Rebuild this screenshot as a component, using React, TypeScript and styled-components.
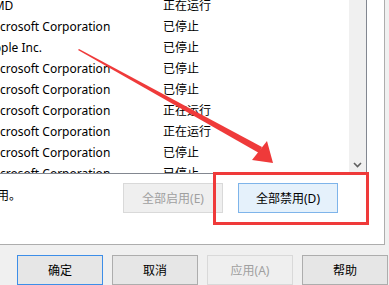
import React from "react";
import styled, { createGlobalStyle } from "styled-components";

// msconfig "服务" tab, scrolled list + buttons, with a red annotation on top

const GlobalStyle = createGlobalStyle`
  html, body {
    margin: 0;
    padding: 0;
    background: #f0f0f0;
  }
  body {
    width: 389px;
    height: 285px;
    overflow: hidden;
    font-family: "Noto Sans", "Noto Sans CJK SC", sans-serif;
    font-size: 12px;
    color: #000;
  }
`;

interface Service {
  maker: string;
  status: string;
}

const services: Service[] = [
  { maker: "AMD", status: "正在运行" },
  { maker: "Microsoft Corporation", status: "已停止" },
  { maker: "Apple Inc.", status: "已停止" },
  { maker: "Microsoft Corporation", status: "已停止" },
  { maker: "Microsoft Corporation", status: "已停止" },
  { maker: "Microsoft Corporation", status: "正在运行" },
  { maker: "Microsoft Corporation", status: "正在运行" },
  { maker: "Microsoft Corporation", status: "已停止" },
  { maker: "Microsoft Corporation", status: "已停止" },
];

const Dialog = styled.div`
  position: relative;
  width: 389px;
  height: 285px;
  display: flex;
  flex-direction: column;
`;

const TabPage = styled.div`
  width: 384px;
  height: 248px;
  background: #ffffff;
  border-right: 1px solid #adadad;
  border-bottom: 1px solid #adadad;
  display: flex;
  flex-direction: column;
`;

const ListView = styled.div`
  width: 366px;
  height: 173px;
  border-right: 1px solid #828790;
  border-bottom: 1px solid #828790;
  display: flex;
  flex-shrink: 0;
`;

const ListBody = styled.div`
  flex: 1;
  overflow: hidden;
`;

// horizontally and vertically scrolled content of the list
const ListContent = styled.div`
  margin-top: -5px;
  margin-left: -14px;
`;

const Row = styled.div`
  display: grid;
  grid-template-columns: 177px 1fr;
  height: 21px;
  align-items: center;
  white-space: nowrap;
`;

const Cell = styled.span`
  line-height: 21px;
`;

const Scrollbar = styled.div`
  width: 17px;
  background: #f0f0f0;
  display: flex;
  flex-direction: column;
  justify-content: flex-end;
  align-items: center;
  padding-bottom: 5px;
  box-sizing: border-box;
`;

const ControlRow = styled.div`
  display: flex;
  align-items: center;
  padding-top: 9px;
  height: 30px;
`;

const NoteClip = styled.div`
  width: 21px;
  display: flex;
  justify-content: flex-end;
  overflow: hidden;
  white-space: nowrap;
  margin-top: -6px;
  margin-right: 102px;
`;

const Button = styled.button<{ $disabled?: boolean; $hot?: boolean; $width?: number }>`
  box-sizing: border-box;
  width: ${(p) => p.$width ?? 100}px;
  height: 30px;
  padding: 0;
  font-family: inherit;
  font-size: 12px;
  color: ${(p) => (p.$disabled ? "#a0a0a0" : "#000")};
  background: ${(p) => (p.$hot ? "#e5f1fb" : p.$disabled ? "#efefef" : "#e6e6e6")};
  border: 1px solid
    ${(p) => (p.$hot ? "#7eb4ea" : p.$disabled ? "#d9d9d9" : "#adadad")};
  cursor: ${(p) => (p.$disabled ? "default" : "pointer")};
`;

const DefaultButton = styled(Button)`
  border-color: #3d8ee8;
`;

const ButtonGap = styled.div`
  width: 15px;
`;

const Footer = styled.div`
  display: flex;
  gap: 9px;
  padding: 10px 0 0 17px;
`;

const Overlay = styled.svg`
  position: absolute;
  left: 0;
  top: 0;
  pointer-events: none;
`;

const Highlight = styled.div`
  position: absolute;
  left: 213px;
  top: 172px;
  width: 150px;
  height: 47px;
  border: 3px solid #ef3a3a;
  pointer-events: none;
`;

const Chevron = () => (
  <svg width="9" height="6" viewBox="0 0 9 6">
    <path d="M1 1 L4.5 4.5 L8 1" fill="none" stroke="#606060" strokeWidth="1.6" />
  </svg>
);

export default function App() {
  return (
    <>
      <GlobalStyle />
      <Dialog>
        <TabPage>
          <ListView>
            <ListBody>
              <ListContent>
                {services.map((s, i) => (
                  <Row key={i}>
                    <Cell>{s.maker}</Cell>
                    <Cell>{s.status}</Cell>
                  </Row>
                ))}
              </ListContent>
            </ListBody>
            <Scrollbar>
              <Chevron />
            </Scrollbar>
          </ListView>
          <ControlRow>
            <NoteClip>
              <span>请注意，某些安全的 Microsoft 服务可能无法禁用。</span>
            </NoteClip>
            <Button $disabled>全部启用(E)</Button>
            <ButtonGap />
            <Button $hot>全部禁用(D)</Button>
          </ControlRow>
        </TabPage>
        <Footer>
          <DefaultButton $width={86}>确定</DefaultButton>
          <Button $width={86}>取消</Button>
          <Button $width={86} $disabled>应用(A)</Button>
          <Button $width={86}>帮助</Button>
        </Footer>
        <Highlight />
        <Overlay width="389" height="285" viewBox="0 0 389 285">
          <polygon points="78,50 79,49 262,147 259,153" fill="#ef3a3a" />
          <polygon points="273,163 252,160 267,141" fill="#ef3a3a" />
        </Overlay>
      </Dialog>
    </>
  );
}
